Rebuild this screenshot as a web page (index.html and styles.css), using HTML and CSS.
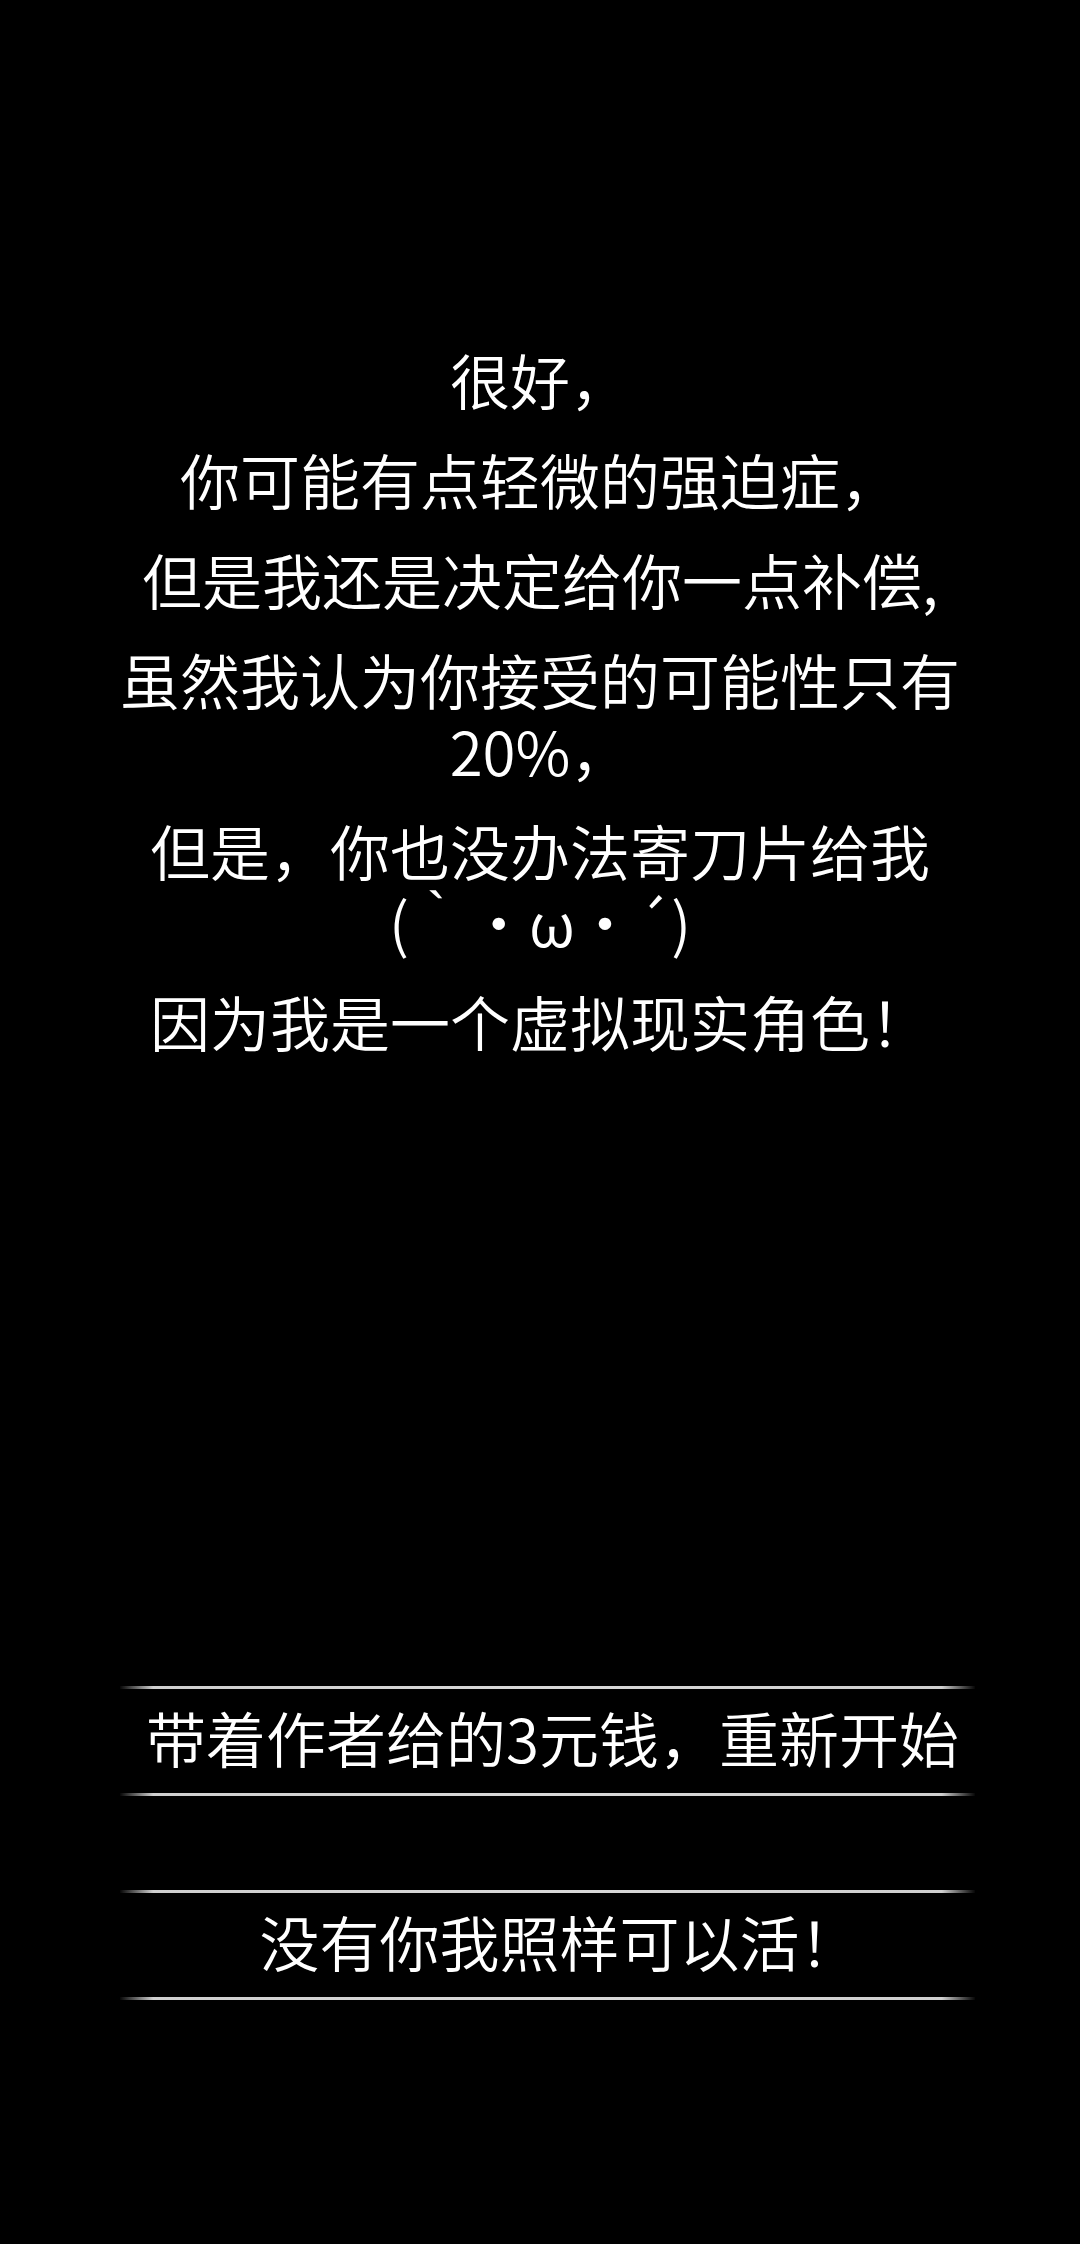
FILE: index.html
```html
<!DOCTYPE html>
<html lang="zh-CN">
<head>
    <meta charset="UTF-8">
    <meta name="viewport" content="width=device-width, initial-scale=1.0">
    <title>结局</title>
    <link rel="stylesheet" href="styles.css">
</head>
<body>
    <div class="screen">
        <div class="dialogue">
            <p>很好，</p>
            <p>你可能有点轻微的强迫症，</p>
            <p>但是我还是决定给你一点补偿,</p>
            <p>虽然我认为你接受的可能性只有20%，</p>
            <p>但是，你也没办法寄刀片给我(｀・ω・´)</p>
            <p>因为我是一个虚拟现实角色！</p>
        </div>

        <div class="choices">
            <button class="choice">带着作者给的3元钱，重新开始</button>
            <button class="choice choice-short">没有你我照样可以活！</button>
        </div>
    </div>
</body>
</html>
```

FILE: styles.css
```css
* {
    margin: 0;
    padding: 0;
    box-sizing: border-box;
}

body {
    background: #000;
    color: #fff;
    font-family: "Noto Sans CJK SC", "Noto Sans", sans-serif;
    font-weight: 350;
}

.screen {
    min-height: 100vh;
    display: flex;
    flex-direction: column;
}

/* 900px wide so the long lines wrap where the game wraps them */
.dialogue {
    width: 900px;
    margin: 0 auto;
    padding-top: 343px;
    display: flex;
    flex-direction: column;
    gap: 29px;
    text-align: center;
    font-size: 60px;
    line-height: 71px;
}

.choices {
    margin-top: auto;
    padding: 0 0 244px 120px;
    display: flex;
    flex-direction: column;
    gap: 94px;
}

/* choice buttons: text between two faded rules */
.choice {
    width: 855px;
    height: 110px;
    background: none;
    color: #fff;
    font-family: inherit;
    font-weight: inherit;
    font-size: 60px;
    line-height: 96px;
    padding: 0 0 8px 10px;
    text-align: center;
    border-style: solid;
    border-width: 3px 0;
    border-image: linear-gradient(to right, rgba(210,210,210,0) 0%, #cfcfcf 4%, #d8d8d8 50%, #cfcfcf 96%, rgba(210,210,210,0) 100%) 1;
    cursor: pointer;
}

.choice-short {
    padding-left: 24px;
}
```
